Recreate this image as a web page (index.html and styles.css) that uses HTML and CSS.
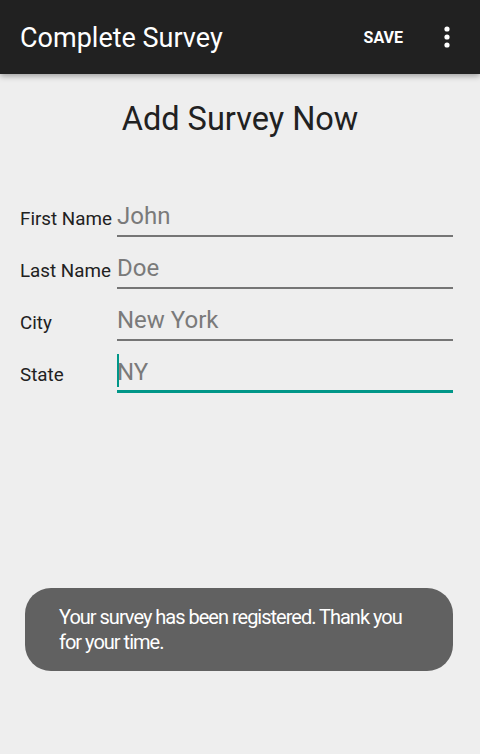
FILE: index.html
```html
<!DOCTYPE html>
<html>
<head>
<meta charset="utf-8">
<link rel="stylesheet" href="styles.css">
</head>
<body>
<div class="screen">
  <header class="appbar">
    <div class="title">Complete Survey</div>
    <div class="action">SAVE</div>
    <svg class="overflow" width="8" height="22" viewBox="0 0 8 22">
      <circle cx="4" cy="3" r="2.6" fill="#fff"/>
      <circle cx="4" cy="11" r="2.6" fill="#fff"/>
      <circle cx="4" cy="19" r="2.6" fill="#fff"/>
    </svg>
  </header>
  <main class="content">
    <h1 class="heading">Add Survey Now</h1>
    <div class="form">
      <div class="row"><span class="label">First Name</span><div class="field"><span class="value">John</span></div></div>
      <div class="row"><span class="label">Last Name</span><div class="field"><span class="value">Doe</span></div></div>
      <div class="row"><span class="label">City</span><div class="field"><span class="value">New York</span></div></div>
      <div class="row"><span class="label">State</span><div class="field focused"><span class="cursor"></span><span class="value">NY</span></div></div>
    </div>
    <div class="toast">Your survey has been registered. Thank you for your time.</div>
  </main>
</div>
</body>
</html>
```
FILE: styles.css
```css
* { box-sizing: border-box; }
html, body { margin: 0; padding: 0; }
body { background: #eeeeee; font-family: Roboto, "Noto Sans", sans-serif; }
.screen { width: 480px; height: 754px; position: relative; overflow: hidden; background: #eeeeee; }
.appbar {
  height: 74px; background: #212121; display: flex; align-items: center;
  padding: 0 20px; box-shadow: 0 2px 6px rgba(0,0,0,0.35); position: relative; z-index: 1;
}
.title { color: #fff; font-size: 27px; flex: 1; margin-top: 1px; }
.action { color: #fff; font-weight: 700; font-size: 16px; margin-right: 40px; margin-top: 1px; }
.overflow { margin-right: 9px; }
.content { display: flex; flex-direction: column; }
.heading { margin: 25px 0 0; font-weight: 400; font-size: 32.5px; color: #212121; text-align: center; line-height: 40px; }
.form { margin-top: 46px; padding: 0 27px 0 20px; display: flex; flex-direction: column; }
.row { display: flex; align-items: flex-end; height: 52px; }
.label { width: 97px; font-size: 18.8px; color: #212121; padding-bottom: 7px; white-space: nowrap; }
.field { flex: 1; height: 44px; border-bottom: 2px solid #757575; display: flex; align-items: center; position: relative; padding-top: 4px; }
.field.focused { border-bottom: 3px solid #009688; }
.value { font-size: 24px; color: #7a7a7a; }
.cursor { position: absolute; left: 0; top: 5px; width: 2px; height: 33px; background: #009688; }
.toast {
  margin: 195px 27px 0 25px; height: 83px; background: #616161; border-radius: 26px;
  color: #fff; font-size: 20px; line-height: 25px; padding: 17px 40px 0 34px;
  letter-spacing: -1px;
}
```
